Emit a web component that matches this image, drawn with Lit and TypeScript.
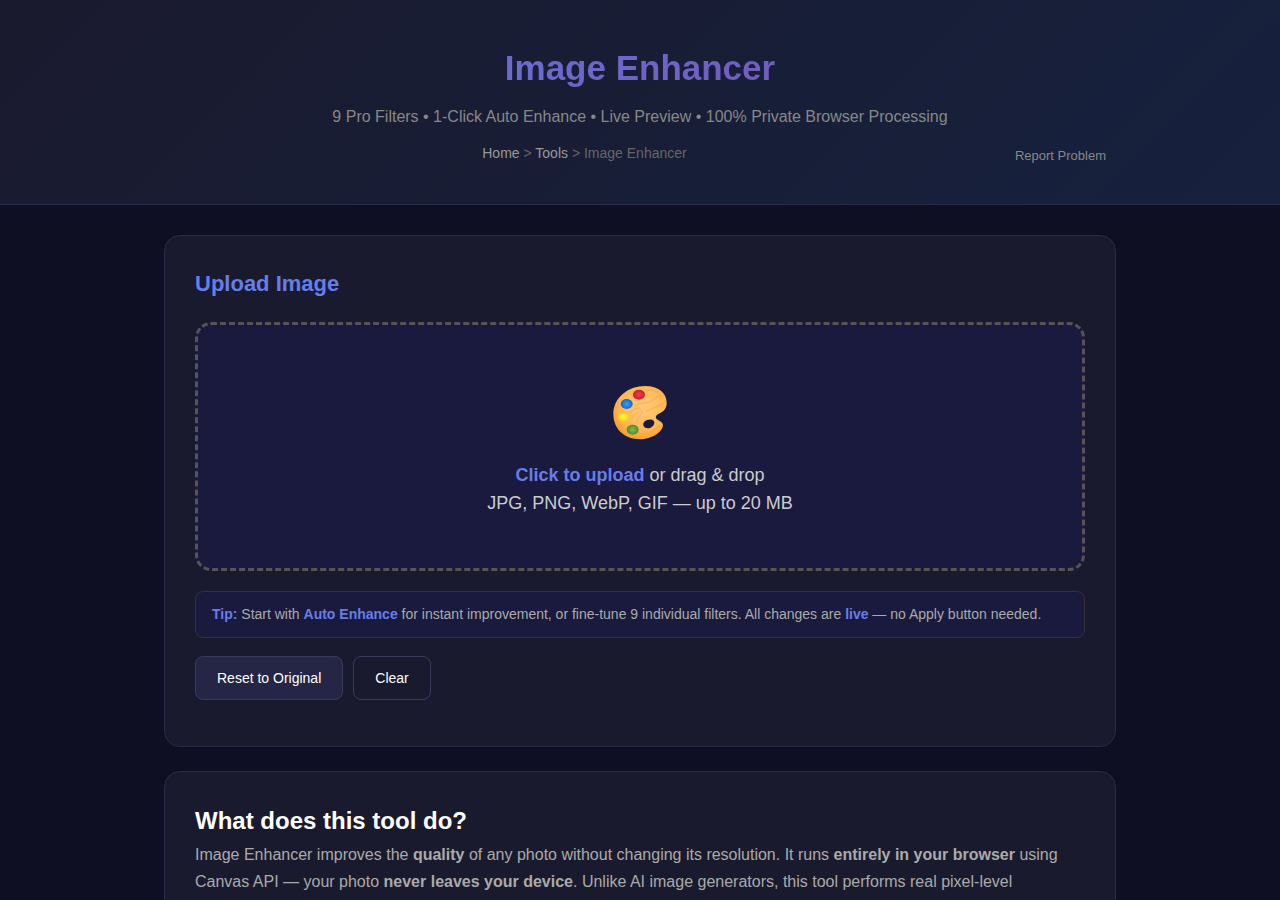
import { LitElement, html, css, svg } from "lit";
import { customElement } from "lit/decorators.js";

const paints = [
  { id: "red", x: 81, y: 29, light: "#e83a44", dark: "#c4212c" },
  { id: "blue", x: 44, y: 57, light: "#2f95f0", dark: "#1669bd" },
  { id: "yellow", x: 35, y: 96, light: "#ffee40", dark: "#fcc41c" },
  { id: "green", x: 62, y: 134, light: "#7bb342", dark: "#4f8a2c" },
];

@customElement("app-root")
export class AppRoot extends LitElement {
  static styles = css`
    :host {
      display: block;
      min-height: 100vh;
      background: #0f0f23;
      color: #fff;
      font-family: "Liberation Sans", Arial, sans-serif;
      font-size: 16px;
      line-height: 27px;
    }
    * {
      box-sizing: border-box;
    }
    h1, h2, p {
      margin: 0;
    }
    .header {
      padding: 40px 20px 34px;
      background: linear-gradient(135deg, #1a1a2e 0%, #16213e 100%);
      border-bottom: 1px solid #2a2a4a;
      text-align: center;
    }
    .inner {
      max-width: 952px;
      margin: 0 auto;
    }
    .title {
      margin-bottom: 8px;
      font-size: 35px;
      line-height: 56px;
      background: linear-gradient(135deg, #667eea 0%, #764ba2 100%);
      -webkit-background-clip: text;
      background-clip: text;
      color: transparent;
    }
    .subtitle {
      color: #888;
      line-height: 26px;
    }
    .nav-row {
      display: flex;
      align-items: center;
      margin-top: 12px;
    }
    .crumbs {
      flex: 1;
      padding-bottom: 6px;
      color: #666;
      font-size: 14px;
      line-height: 22px;
    }
    .crumbs a {
      color: #999;
      text-decoration: none;
    }
    .report {
      padding: 6px 10px;
      border: 0;
      background: none;
      color: #888;
      font: inherit;
      font-size: 13px;
      line-height: 14px;
    }
    .content {
      max-width: 992px;
      margin: 0 auto;
      padding: 30px 20px;
      display: flex;
      flex-direction: column;
      gap: 24px;
    }
    .card {
      padding: 30px;
      background: #1a1a2e;
      border: 1px solid #2a2a4a;
      border-radius: 16px;
    }
    .upload-card {
      padding-bottom: 46px;
    }
    .upload-title {
      margin-bottom: 20px;
      color: #667eea;
      font-size: 22px;
      line-height: 36px;
    }
    .drop {
      display: block;
      padding: 60px 20px 51px;
      background: #1a1a3e;
      border: 3px dashed #555;
      border-radius: 16px;
      color: #ccc;
      font-size: 18px;
      line-height: 28px;
      text-align: center;
      cursor: pointer;
    }
    .file {
      position: absolute;
      width: 1px;
      height: 1px;
      opacity: 0;
    }
    .palette {
      display: block;
      width: 56px;
      height: 56px;
      margin: 0 auto 20px;
    }
    .accent {
      color: #667eea;
    }
    .tip {
      margin-top: 20px;
      padding: 11px 16px;
      background: #1a1a3e;
      border: 1px solid #333;
      border-radius: 8px;
      color: #aaa;
      font-size: 14px;
      line-height: 23px;
    }
    .actions {
      display: flex;
      flex-wrap: wrap;
      gap: 10px;
      margin-top: 18px;
    }
    .btn {
      padding: 13px 21px;
      border: 1px solid #3a3a5c;
      border-radius: 8px;
      background: transparent;
      color: #fff;
      font: inherit;
      font-size: 14px;
      line-height: 16px;
    }
    .btn-filled {
      background: #252545;
    }
    .about-title {
      margin-bottom: 1px;
      font-size: 24px;
      line-height: 38px;
    }
    .about-text {
      color: #aaa;
    }
  `;

  private palette() {
    return html`
      <svg class="palette" viewBox="0 0 168 168" aria-hidden="true">
        <defs>
          <radialGradient id="wood" cx="0.55" cy="0.4" r="0.65">
            <stop offset="0.2" stop-color="#ffc674" />
            <stop offset="0.7" stop-color="#ffb552" />
            <stop offset="1" stop-color="#f4962a" />
          </radialGradient>
          ${paints.map(
            (p) => svg`<radialGradient id=${p.id}>
              <stop offset="0.2" stop-color=${p.light} />
              <stop offset="1" stop-color=${p.dark} />
            </radialGradient>`,
          )}
        </defs>
        <path
          fill="url(#wood)"
          fill-rule="evenodd"
          d="M99 3C140 3 164 24 164 53C164 70 156 79 141 86C132 90 129 96 134 102C141 108 152 110 153 120C153 140 120 163 84 163C35 163 4 130 4 88C4 38 48 3 99 3ZM94 121C96 129 107 132 116 128C125 124 129 116 126 109C123 103 114 102 105 105C97 108 92 114 94 121Z"
        />
        <g fill="none" stroke="#f5a544" stroke-width="5" stroke-linecap="round" opacity="0.4">
          <path d="M48 92C55 75 76 65 87 74C99 85 77 93 77 107" />
          <path d="M59 101C64 88 74 83 78 85" />
          <path d="M65 64C88 48 101 60 119 47S142 26 152 34" />
          <path d="M105 78C125 64 141 69 159 49" />
          <path d="M76 143C96 155 122 143 143 121" />
          <path d="M104 17C119 13 130 18 137 21" />
          <path d="M20 116C27 134 38 143 48 148" />
        </g>
        ${paints.map(
          (p) => svg`<ellipse cx=${p.x} cy=${p.y} rx="18" ry="15" fill="url(#${p.id})" />`,
        )}
      </svg>
    `;
  }

  render() {
    return html`
      <header class="header">
        <div class="inner">
          <h1 class="title">Image Enhancer</h1>
          <p class="subtitle">9 Pro Filters • 1-Click Auto Enhance • Live Preview • 100% Private Browser Processing</p>
          <div class="nav-row">
            <nav class="crumbs" aria-label="Breadcrumb">
              <a href="#home">Home</a> &gt; <a href="#tools">Tools</a> &gt; Image Enhancer
            </nav>
            <button class="report" type="button">Report Problem</button>
          </div>
        </div>
      </header>
      <main class="content">
        <section class="card upload-card">
          <h2 class="upload-title">Upload Image</h2>
          <label class="drop" for="file">
            ${this.palette()}
            <strong class="accent">Click to upload</strong> or drag &amp; drop<br />
            JPG, PNG, WebP, GIF — up to 20 MB
          </label>
          <input class="file" id="file" type="file" accept="image/*" />
          <p class="tip">
            <strong class="accent">Tip:</strong> Start with <strong class="accent">Auto Enhance</strong> for instant
            improvement, or fine-tune 9 individual filters. All changes are <strong class="accent">live</strong> — no
            Apply button needed.
          </p>
          <div class="actions">
            <button class="btn btn-filled" type="button">Reset to Original</button>
            <button class="btn" type="button">Clear</button>
          </div>
        </section>
        <section class="card">
          <h2 class="about-title">What does this tool do?</h2>
          <p class="about-text">
            Image Enhancer improves the <strong>quality</strong> of any photo without changing its resolution. It runs
            <strong>entirely in your browser</strong> using Canvas API — your photo
            <strong>never leaves your device</strong>. Unlike AI image generators, this tool performs real pixel-level
          </p>
        </section>
      </main>
    `;
  }
}
